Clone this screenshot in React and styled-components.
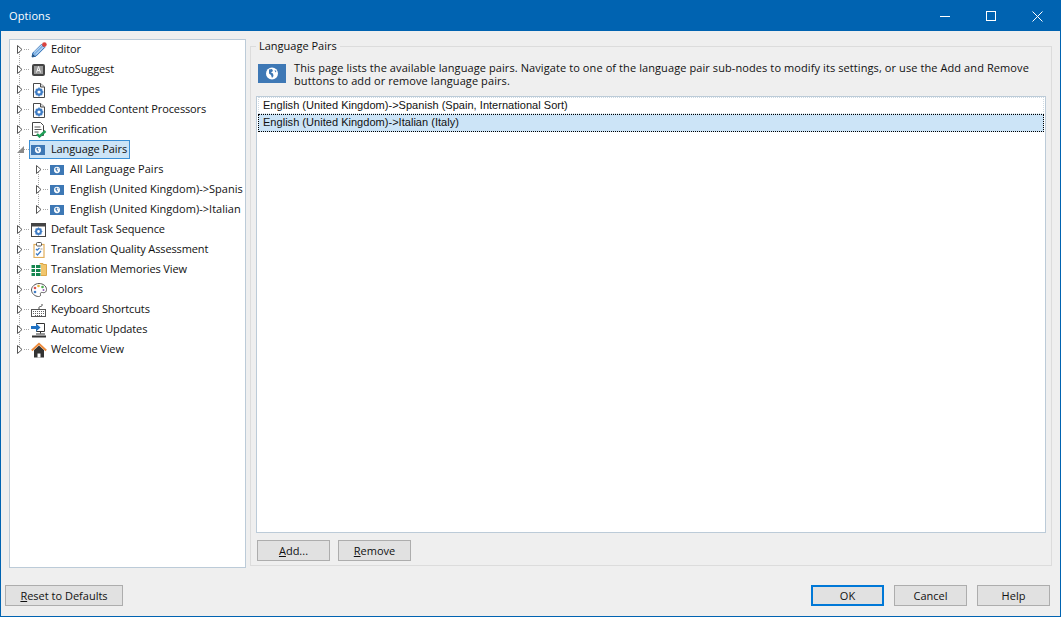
import React from 'react';
import styled, { createGlobalStyle } from 'styled-components';

const GlobalStyle = createGlobalStyle`
  html, body {
    margin: 0;
    padding: 0;
    background: #efefef;
  }
  * {
    box-sizing: border-box;
  }
`;

const uiFont = `'Open Sans', 'Noto Sans', sans-serif`;
const dots = '#a8a8a8';

/* icons */
const Pencil = () => (
  <svg width="16" height="16" viewBox="0 0 16 16">
    <path d="M1 15l.8-4L10.5 2.3l3.2 3.2L5 14.2z" fill="#7fb2e5" stroke="#2f6fb5" />
    <path d="M3 10.5L11 2.8M5 12.5l7.5-7.5" stroke="#d5e6f7" />
    <path d="M1 15l.7-3 2.3 2.3z" fill="#24496f" />
    <circle cx="13.4" cy="2.6" r="2.3" fill="#d9443f" />
  </svg>
);
const KeyA = () => (
  <svg width="16" height="16" viewBox="0 0 16 16">
    <rect x="1" y="2" width="13" height="12" rx="2" fill="#444" />
    <rect x="3" y="4" width="9" height="8" fill="#9a9a9a" />
    <path d="M5.5 10.500l2-6 2 6M6.200 8.500h2.600" fill="none" stroke="#f5f5f5" />
  </svg>
);
const GearPage = () => (
  <svg width="16" height="16" viewBox="0 0 16 16">
    <path d="M2.500 1.500h7l4 3.500v10.500h-11z" fill="#fff" stroke="#4a4a4a" />
    <path d="M9.500 1.500v3.500h4" fill="#ddd" stroke="#4a4a4a" />
    <circle cx="8" cy="10" r="2.700" fill="none" stroke="#3f7cc4" strokeWidth="2.200" />
    <path d="M8 5.600v1.400M8 13v1.400M3.600 10H5M11 10h1.400M4.900 6.900l1 1M10.100 12.100l1 1M4.900 13.100l1-1M10.100 7.900l1-1" stroke="#3f7cc4" strokeWidth="1.300" />
  </svg>
);
const CheckPage = () => (
  <svg width="16" height="16" viewBox="0 0 16 16">
    <path d="M1.500 .5h8l3 3v10h-11z" fill="#fff" stroke="#444" />
    <path d="M3.500 5h6M3.500 7.500h7M3.500 10h4" stroke="#555" />
    <path d="M6 12l2.500 2.500L14.500 9" fill="none" stroke="#1f9e57" strokeWidth="2.400" />
  </svg>
);
const Globe = ({ width = 14, height = 10 }) => (
  <svg width={width} height={height} viewBox="0 0 28 19" preserveAspectRatio="none">
    <rect width="28" height="19" fill="#3e78b5" />
    <circle cx="14" cy="9.500" r="6" fill="#fff" />
    <path d="M11 5.500l3-.5 1 2-2 1.500 2 1 .5 2.500-1.500 2-1-3-2-1.500zM16.500 6l2 1-1 1.500z" fill="#3e78b5" />
  </svg>
);
const GearWindow = () => (
  <svg width="16" height="16" viewBox="0 0 16 16">
    <rect x=".5" y="1.500" width="14" height="13" fill="#fff" stroke="#444" />
    <rect x="1" y="2" width="13" height="2.500" fill="#444" />
    <circle cx="7.500" cy="9.500" r="2.400" fill="none" stroke="#3f7cc4" strokeWidth="2" />
    <path d="M7.500 5.600v1.200M7.500 12.200v1.200M3.600 9.500h1.200M10.200 9.500h1.200M4.700 6.700l.9.9M9.400 11.400l.9.9M4.700 12.300l.9-.9M9.400 7.600l.9-.9" stroke="#3f7cc4" strokeWidth="1.200" />
  </svg>
);
const Clipboard = () => (
  <svg width="16" height="16" viewBox="0 0 16 16">
    <rect x="3" y="2.500" width="10" height="13" fill="#fff" stroke="#e2ae5a" strokeWidth="1.200" />
    <rect x="5.500" y=".5" width="5" height="3.500" rx="1" fill="#fff" stroke="#555" />
    <path d="M5 7l1.200 1.200L8.500 6M5 11.500l1.500 1.500 3.500-4" fill="none" stroke="#3f7cc4" strokeWidth="1.300" />
    <path d="M9.500 7h2" stroke="#999" />
  </svg>
);
const Memories = () => (
  <svg width="16" height="16" viewBox="0 0 16 16">
    <path d="M9 1.500h3v1h3.500v11H9z" fill="#f2c66d" stroke="#dca94a" />
    <rect x="0" y="2.500" width="10" height="12" fill="#fff" />
    <path d="M.5 3h3.500v3H.5zM.5 7h3.500v3H.5zM.5 11h3.500v3H.5zM5 3h4.500v3H5zM5 7h4.500v3H5zM5 11h4.500v3H5z" fill="#15874f" />
  </svg>
);
const Palette = () => (
  <svg width="16" height="16" viewBox="0 0 16 16">
    <path d="M8 1.500c4 0 7.500 2.500 7.500 6 0 3-2.500 3.500-4 3-1.500-.4-2.500.5-2 2 .4 1.400-.5 2-2 2-3.500 0-7-3-7-6.500 0-3.500 3.500-6.500 7.500-6.500z" fill="#fff" stroke="#555" />
    <circle cx="4" cy="6" r="1.300" fill="#d9534f" />
    <circle cx="7.500" cy="4" r="1.300" fill="#e6b23c" />
    <circle cx="11.500" cy="5" r="1.300" fill="#4caf50" />
    <circle cx="4" cy="10" r="1.300" fill="#3f7cc4" />
    <circle cx="12.500" cy="8" r="1" fill="#8e5ab5" />
  </svg>
);
const Keyboard = () => (
  <svg width="16" height="16" viewBox="0 0 16 16">
    <path d="M8 7V5.500c0-1.500 3-.5 3-2V2" fill="none" stroke="#444" />
    <rect x=".5" y="7.500" width="14" height="7" fill="#fff" stroke="#555" />
    <path d="M2 9.500h11M2 11.500h11M4 13.500h7" stroke="#666" strokeDasharray="1 1" />
  </svg>
);
const Updates = () => (
  <svg width="16" height="16" viewBox="0 0 16 16">
    <path d="M5.500 1.500h8v8h-8z" fill="#fff" stroke="#333" />
    <path d="M9.500 9.500v2M5 12h9" stroke="#333" />
    <path d="M1 14.500h14" stroke="#333" strokeWidth="2" />
    <path d="M0 4h5V1.500L9.500 5.500 5 9.500V7H0z" fill="#1f72c4" />
  </svg>
);
const House = () => (
  <svg width="16" height="16" viewBox="0 0 16 16">
    <path d="M3 8v7.500h10V8L8 3.500z" fill="#333" />
    <path d="M6.500 15.500v-4h3v4z" fill="#fff" />
    <path d="M.8 8.500L8 1.800l7.200 6.700" fill="none" stroke="#ec8a3b" strokeWidth="2" />
  </svg>
);

const Triangle = ({ open }) =>
  open ? (
    <svg width="7" height="7" viewBox="0 0 7 7">
      <path d="M7 0v7H0z" fill="#8a8a8a" />
    </svg>
  ) : (
    <svg width="6" height="9" viewBox="0 0 6 9">
      <path d="M.5 .5l4.500 4-4.500 4z" fill="#fff" stroke="#555" />
    </svg>
  );

const treeItems = [
  { label: 'Editor', icon: <Pencil /> },
  { label: 'AutoSuggest', icon: <KeyA /> },
  { label: 'File Types', icon: <GearPage /> },
  { label: 'Embedded Content Processors', icon: <GearPage /> },
  { label: 'Verification', icon: <CheckPage /> },
  { label: 'Language Pairs', icon: <Globe />, open: true, selected: true },
  { label: 'All Language Pairs', icon: <Globe />, level: 1, first: true },
  { label: 'English (United Kingdom)->Spanish (Spain, International Sort)', icon: <Globe />, level: 1 },
  { label: 'English (United Kingdom)->Italian (Italy)', icon: <Globe />, level: 1, last: true },
  { label: 'Default Task Sequence', icon: <GearWindow /> },
  { label: 'Translation Quality Assessment', icon: <Clipboard /> },
  { label: 'Translation Memories View', icon: <Memories /> },
  { label: 'Colors', icon: <Palette /> },
  { label: 'Keyboard Shortcuts', icon: <Keyboard /> },
  { label: 'Automatic Updates', icon: <Updates /> },
  { label: 'Welcome View', icon: <House />, lastRoot: true },
];

export default function App() {
  return (
    <>
      <GlobalStyle />
      <Window>
        <TitleBar>
          <Title>Options</Title>
          <WindowControls>
            <ControlButton>
              <svg width="10" height="10" viewBox="0 0 10 10">
                <path d="M0 5.500h10" stroke="#fff" />
              </svg>
            </ControlButton>
            <ControlButton>
              <svg width="10" height="10" viewBox="0 0 10 10">
                <rect x=".5" y=".5" width="9" height="9" fill="none" stroke="#fff" />
              </svg>
            </ControlButton>
            <ControlButton>
              <svg width="11" height="11" viewBox="0 0 11 11">
                <path d="M.5 .5l10 10M10.500 .5l-10 10" stroke="#fff" />
              </svg>
            </ControlButton>
          </WindowControls>
        </TitleBar>

        <Main>
          <TreePanel>
            {treeItems.map((item, i) => (
              <TreeRow key={item.label}>
                {item.level === 1 && <Guide />}
                <Expander
                  $first={i === 0 || item.first}
                  $last={item.lastRoot || item.last}
                >
                  <Triangle open={item.open} />
                </Expander>
                <TreeLabel $selected={item.selected}>
                  <TreeIcon>{item.icon}</TreeIcon>
                  <TreeText $child={item.level === 1}>{item.label}</TreeText>
                </TreeLabel>
              </TreeRow>
            ))}
          </TreePanel>

          <GroupBox>
            <GroupTitle>Language Pairs</GroupTitle>
            <Description>
              <Globe width={28} height={19} />
              <DescriptionText>
                This page lists the available language pairs. Navigate to one of the language pair sub-nodes to modify its settings, or use the Add and Remove
                <br />
                buttons to add or remove language pairs.
              </DescriptionText>
            </Description>
            <PairList>
              <PairRow>English (United Kingdom)-&gt;Spanish (Spain, International Sort)</PairRow>
              <PairRow $selected>English (United Kingdom)-&gt;Italian (Italy)</PairRow>
            </PairList>
            <GroupButtons>
              <Button><u>A</u>dd...</Button>
              <Button><u>R</u>emove</Button>
            </GroupButtons>
          </GroupBox>
        </Main>

        <Footer>
          <ResetButton><u>R</u>eset to Defaults</ResetButton>
          <FooterRight>
            <Button $primary>OK</Button>
            <Button>Cancel</Button>
            <Button>Help</Button>
          </FooterRight>
        </Footer>
      </Window>
    </>
  );
}

const Window = styled.div`
  width: 1061px;
  height: 617px;
  display: flex;
  flex-direction: column;
  background: #efefef;
  border: 1px solid #0063b1;
  font-family: ${uiFont};
  font-size: 11px;
  color: #111;
  overflow: hidden;
`;

const TitleBar = styled.div`
  height: 30px;
  flex: none;
  display: flex;
  align-items: center;
  justify-content: space-between;
  background: #0063b1;
  padding-left: 8px;
`;

const Title = styled.div`
  color: #fff;
  font-size: 11px;
  letter-spacing: 0.1px;
  margin-bottom: 2px;
`;

const WindowControls = styled.div`
  display: flex;
  align-items: center;
`;

const ControlButton = styled.div`
  width: 46px;
  height: 30px;
  display: flex;
  align-items: center;
  justify-content: center;
`;

const Main = styled.div`
  flex: none;
  height: 529px;
  margin-top: 8px;
  padding-left: 8px;
  display: flex;
  align-items: flex-start;
`;

const TreePanel = styled.div`
  width: 237px;
  height: 529px;
  flex: none;
  background: #fff;
  border: 1px solid #bccbd8;
`;

const TreeRow = styled.div`
  width: 233px;
  height: 20px;
  display: flex;
  overflow: hidden;
  white-space: nowrap;
`;

const Guide = styled.div`
  width: 19px;
  height: 20px;
  flex: none;
  background-image: repeating-linear-gradient(to bottom, ${dots} 0 1px, transparent 1px 2px);
  background-size: 1px 20px;
  background-position: 9px 0;
  background-repeat: no-repeat;
`;

const Expander = styled.div`
  width: 19px;
  height: 19px;
  flex: none;
  display: flex;
  align-items: center;
  padding-left: 7px;
  background-image:
    repeating-linear-gradient(to bottom, ${dots} 0 1px, transparent 1px 2px),
    repeating-linear-gradient(to right, ${dots} 0 1px, transparent 1px 2px);
  background-size: 1px ${(p) => (p.$first || p.$last ? '10px' : '20px')}, 6px 1px;
  background-position: 9px ${(p) => (p.$first ? '10px' : '0')}, 14px 9px;
  background-repeat: no-repeat;
`;

const TreeLabel = styled.div`
  height: 19px;
  display: flex;
  align-items: center;
  padding: 0 2px 0 1px;
  border: 1px solid ${(p) => (p.$selected ? '#3a8fd6' : 'transparent')};
  background: ${(p) => (p.$selected ? '#cce4f7' : 'transparent')};
`;

const TreeIcon = styled.span`
  width: 16px;
  height: 16px;
  margin-right: 4px;
  flex: none;
  display: flex;
  align-items: center;
`;

const TreeText = styled.span`
  line-height: 15px;
  margin-top: -2px;
  letter-spacing: ${(p) => (p.$child ? '0.02px' : '-0.12px')};
`;

const GroupBox = styled.fieldset`
  width: 802px;
  height: 527px;
  margin: 0 0 0 4px;
  padding: 5px 5px 4px 5px;
  border: 1px solid #dcdcdc;
  display: flex;
  flex-direction: column;
  min-width: 0;
`;

const GroupTitle = styled.legend`
  margin-left: 0;
  padding: 0 3px;
  font-size: 11px;
  line-height: 14px;
`;

const Description = styled.div`
  display: flex;
  align-items: flex-start;
  gap: 8px;
  padding: 0 0 0 2px;
  height: 32px;
  margin-top: 6px;
  flex: none;
`;

const DescriptionText = styled.div`
  line-height: 13px;
  margin-top: -3px;
  white-space: nowrap;
  letter-spacing: 0.09px;
`;

const PairList = styled.div`
  flex: 1;
  width: 790px;
  background: #fff;
  border: 1px solid #bccbd8;
  padding: 0 1px;
  font-family: 'Liberation Sans', Arial, sans-serif;
  font-size: 11px;
  letter-spacing: 0.03px;
`;

const PairRow = styled.div`
  height: ${(p) => (p.$selected ? '18px' : '17px')};
  line-height: 15px;
  padding-left: 4px;
  border: 1px dotted ${(p) => (p.$selected ? '#000' : '#cfdae2')};
  background: ${(p) => (p.$selected ? '#cce4f7' : 'transparent')};
`;

const GroupButtons = styled.div`
  display: flex;
  gap: 8px;
  padding: 7px 0 0 1px;
  flex: none;
`;

const Button = styled.button`
  width: 73px;
  height: 21px;
  padding: 0 0 1px;
  background: #e1e1e1;
  border: ${(p) => (p.$primary ? '2px solid #0078d7' : '1px solid #adadad')};
  font-family: ${uiFont};
  font-size: 11px;
  color: #111;
`;

const ResetButton = styled(Button)`
  width: 118px;
`;

const Footer = styled.div`
  flex: none;
  display: flex;
  justify-content: space-between;
  padding: 17px 10px 0 4px;
`;

const FooterRight = styled.div`
  display: flex;
  gap: 10px;
`;
